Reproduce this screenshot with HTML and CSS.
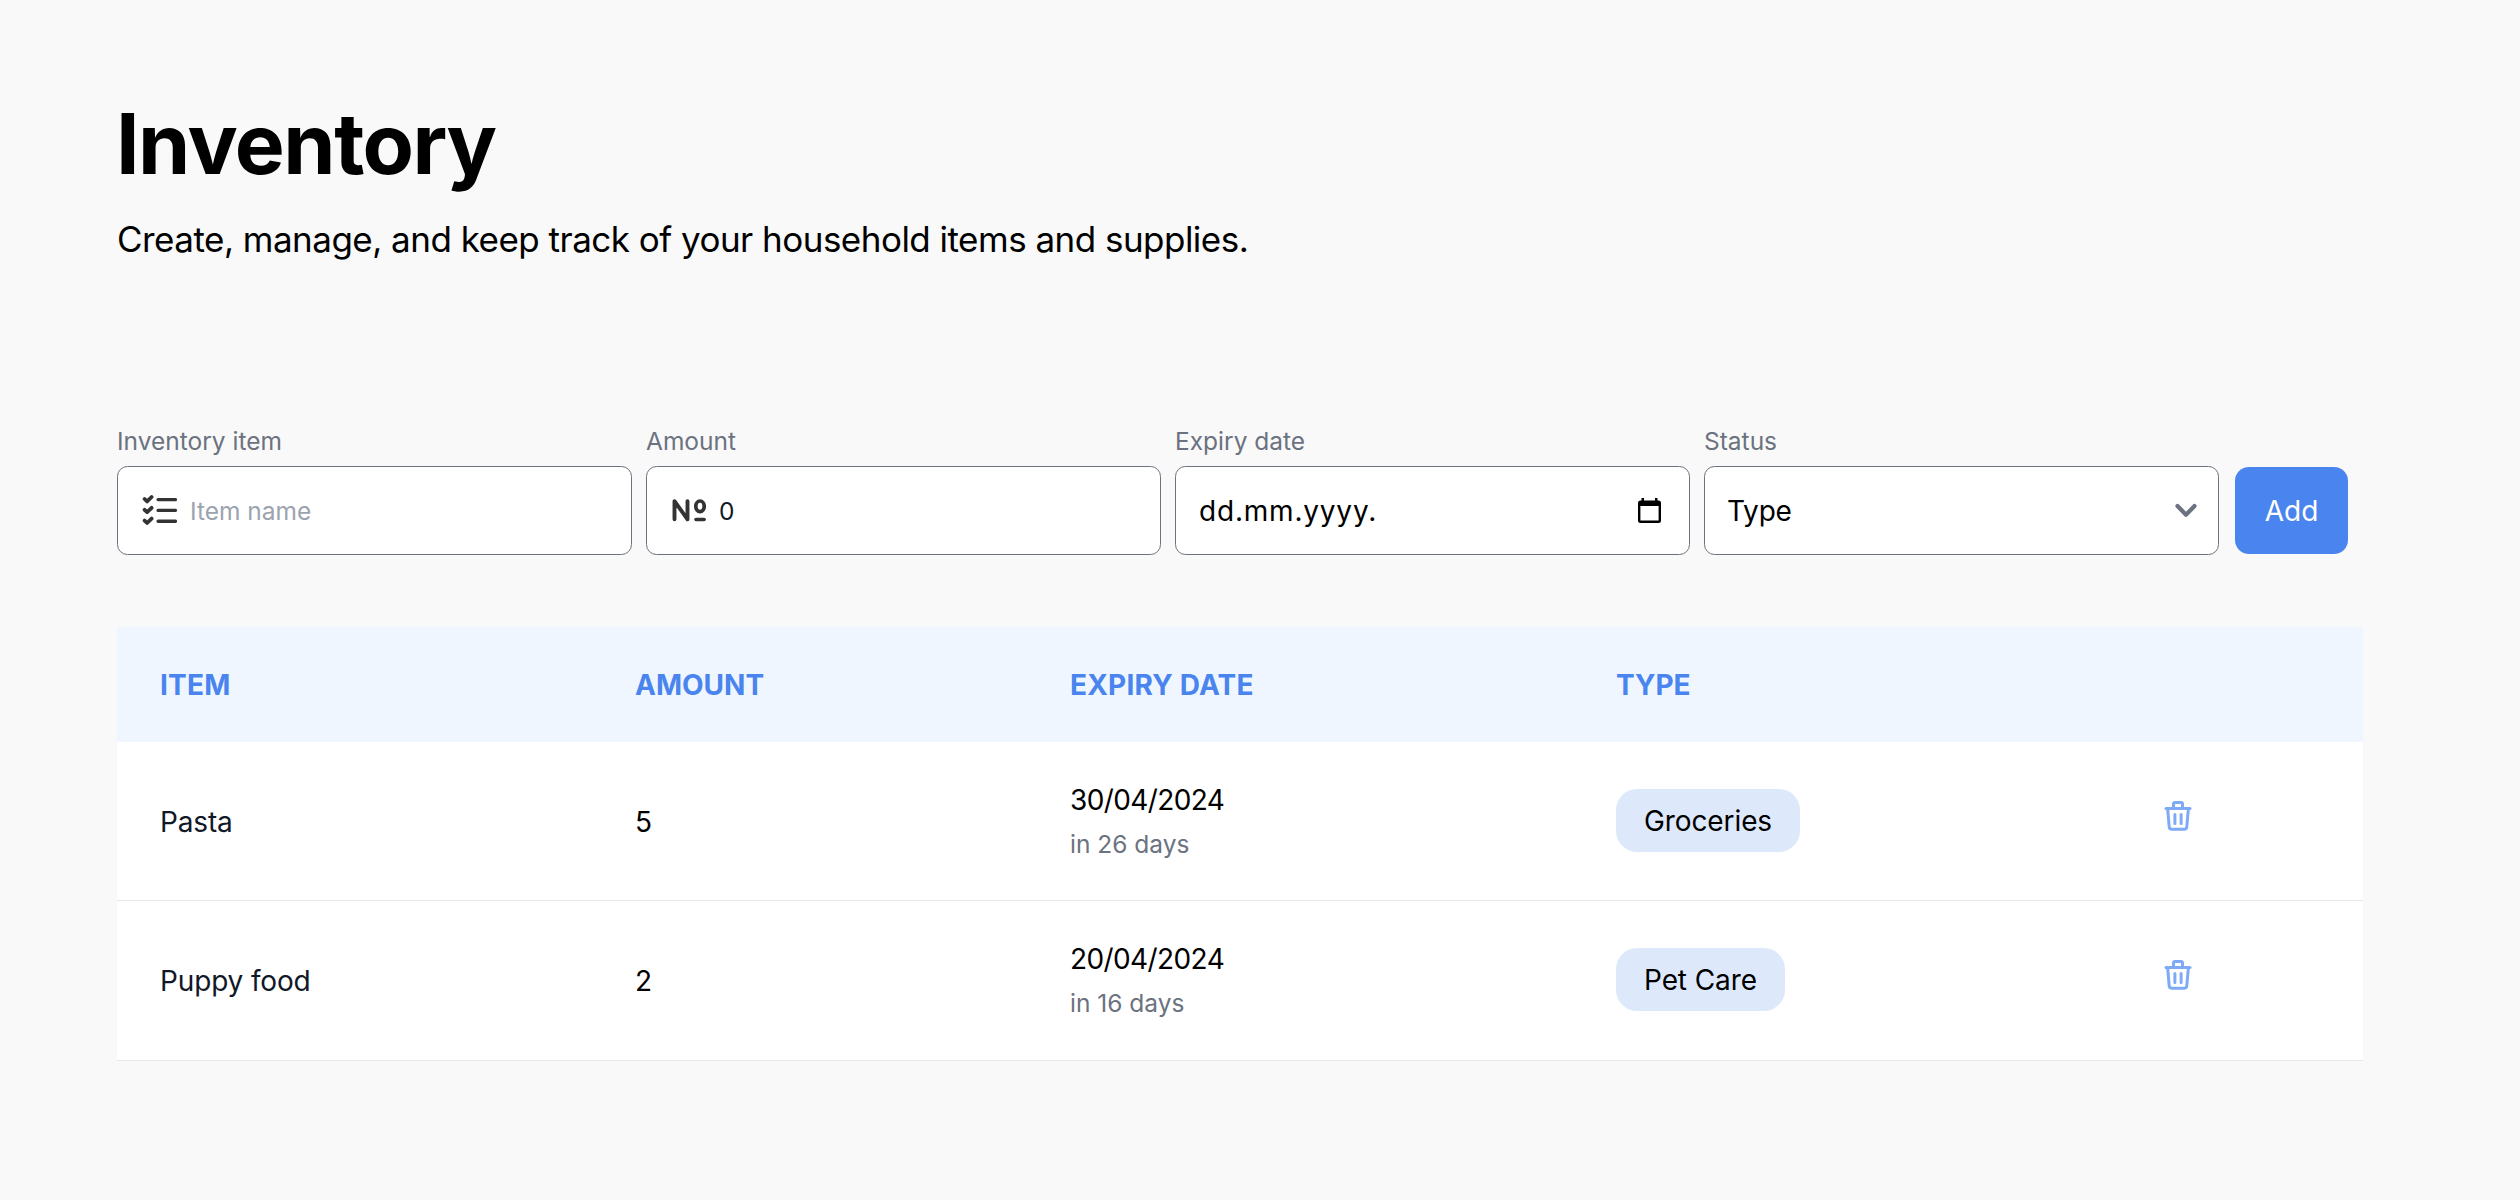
FILE: index.html
```html
<!DOCTYPE html>
<html lang="en">
<head>
<meta charset="utf-8">
<title>Inventory</title>
<link rel="stylesheet" href="styles.css">
</head>
<body>
<svg class="sprite" aria-hidden="true">
  <symbol id="trash" viewBox="0 0 35 35">
    <g fill="none" stroke="currentColor" stroke-width="3" stroke-linecap="round" stroke-linejoin="round">
      <path d="M6 10.5h24"/>
      <path d="M13.5 10.5v-4.500a1.500 1.500 0 0 1 1.500-1.500h6a1.500 1.500 0 0 1 1.500 1.500v4.500"/>
      <path d="M7.600 10.500l1.600 18.300a2.700 2.700 0 0 0 2.700 2.400h12.200a2.700 2.700 0 0 0 2.700-2.400l1.600-18.300"/>
      <path d="M14.900 16.500v9M21.100 16.500v9"/>
    </g>
  </symbol>
</svg>
<main class="page">
  <h1 class="title">Inventory</h1>
  <p class="subtitle">Create, manage, and keep track of your household items and supplies.</p>

  <form class="form">
    <div class="field">
      <label class="label">Inventory item</label>
      <div class="control">
        <svg class="lead" viewBox="0 0 35 35" fill="none" stroke="#333" stroke-linecap="round" stroke-linejoin="round">
          <path stroke-width="3.800" d="M2.600 6l2.500 2.400 4.500-4.400M2.600 16.800l2.500 2.400 4.500-4.400M2.600 27.600l2.500 2.400 4.500-4.400"/>
          <path stroke-width="3.400" d="M16.100 6.600h17.300M16.100 17.400h17.300M16.100 28.200h17.300"/>
        </svg>
        <span class="placeholder">Item name</span>
      </div>
    </div>
    <div class="field">
      <label class="label">Amount</label>
      <div class="control">
        <svg class="lead" viewBox="0 0 35 35" fill="none" stroke="#333" stroke-linecap="round" stroke-linejoin="round">
          <path stroke-width="3.900" d="M3.500 26.300v-18.200l13 18.200v-18.200"/>
          <ellipse stroke-width="3.700" cx="29" cy="13.300" rx="4.200" ry="5.300"/>
          <path stroke-width="3.400" d="M24.900 26.500h8.300"/>
        </svg>
        <span class="number">0</span>
      </div>
    </div>
    <div class="field">
      <label class="label">Expiry date</label>
      <div class="control control-wide">
        <span class="date-value">dd.mm.yyyy.</span>
        <svg class="calendar" viewBox="0 0 23 25">
          <path fill="#000" fill-rule="evenodd" d="M3.500 0h2.500v2.500h11v-2.500h2.500v2.500h1a2.500 2.500 0 0 1 2.500 2.500v17.500a2.500 2.500 0 0 1-2.500 2.500h-18a2.500 2.500 0 0 1-2.500-2.500v-17.500a2.500 2.500 0 0 1 2.500-2.500h1zM2.400 8v14.500h18.200v-14.500z"/>
        </svg>
      </div>
    </div>
    <div class="field">
      <label class="label">Status</label>
      <div class="control control-select">
        <span>Type</span>
        <svg class="chevron" viewBox="0 0 22 15" fill="none" stroke="#6b7280" stroke-width="4.200" stroke-linecap="round" stroke-linejoin="round"><path d="M2.500 3l8.500 8.700 8.500-8.700"/></svg>
      </div>
    </div>
    <button class="add" type="button">Add</button>
  </form>

  <section class="table">
    <div class="row head">
      <span class="c-item">ITEM</span><span>AMOUNT</span><span class="c-date">EXPIRY DATE</span><span class="c-type">TYPE</span><span></span>
    </div>
    <div class="row">
      <span class="name">Pasta</span>
      <span class="qty">5</span>
      <div class="expiry"><div class="date">30/04/2024</div><div class="left">in 26 days</div></div>
      <span class="badge">Groceries</span>
      <svg class="trash"><use href="#trash"/></svg>
    </div>
    <div class="row last">
      <span class="name">Puppy food</span>
      <span class="qty">2</span>
      <div class="expiry"><div class="date">20/04/2024</div><div class="left">in 16 days</div></div>
      <span class="badge">Pet Care</span>
      <svg class="trash"><use href="#trash"/></svg>
    </div>
  </section>
</main>
</body>
</html>
```

FILE: styles.css
```css
* { box-sizing: border-box; }
body { margin: 0; background: #f9f9f9; color: #000; font: 28px/42px Inter, "Liberation Sans", sans-serif; }
.sprite { display: none; }
.page { width: 2363px; padding: 102px 0 0 117px; }

.title { margin: 0 0 29px -1px; font-size: 84px; line-height: 84px; font-weight: 700; letter-spacing: -1.5px; }
.subtitle { margin: 0; font-size: 35px; line-height: 49px; letter-spacing: -0.52px; }

.form { display: flex; align-items: flex-end; gap: 14px; margin: 160px 0 72px; }
.field { width: 515px; }
.label { display: block; margin: 0 0 7px; font-size: 24.5px; line-height: 35px; color: #6b7280; }
.control { display: flex; align-items: center; height: 89px; padding: 0 24px; gap: 12px; background: #fff; border: 1px solid #6b7280; border-radius: 10.5px; }
.control-wide { justify-content: space-between; padding: 0 28px 0 23px; }
.control-select { justify-content: space-between; padding: 0 21px 0 22px; letter-spacing: -0.2px; }
.lead { width: 35px; height: 35px; }
.placeholder { padding-left: 1px; font-size: 24.5px; color: #9ca3af; }
.number { padding-left: 1px; font-size: 24.5px; color: #111827; }
.date-value { letter-spacing: 0.8px; }
.calendar { width: 23px; height: 25px; }
.chevron { width: 22px; height: 15px; }
.add { width: 113px; height: 87px; margin: 0 0 1px 2px; padding: 0; border: 0; border-radius: 14px; background: #4a84ee; color: #fff; font: inherit; }

.table { background: #fff; }
.row { display: grid; grid-template-columns: 475px 435px 546px 544px auto; justify-content: start; align-items: start; height: 159px; padding: 37px 0 0 43px; border-bottom: 1px solid #e5e7eb; }
.last { height: 160px; }
.head { align-items: center; height: 115px; padding-top: 0; border: 0; background: #eff6ff; color: #4a84ee; font-weight: 700; }
.c-item, .c-date { letter-spacing: 0.2px; }
.name, .qty { line-height: 87px; }
.name { color: #111827; letter-spacing: -0.15px; }
.date { letter-spacing: -0.6px; }
.left { margin-top: 6px; font-size: 24.5px; line-height: 35px; color: #6b7280; }
.badge { justify-self: start; margin-top: 10px; padding: 1px 28px 0; border-radius: 21px; background: #dde9fb; line-height: 62px; letter-spacing: -0.1px; }
.trash { width: 35px; height: 35px; margin-top: 19px; color: #7faaf5; }
```
